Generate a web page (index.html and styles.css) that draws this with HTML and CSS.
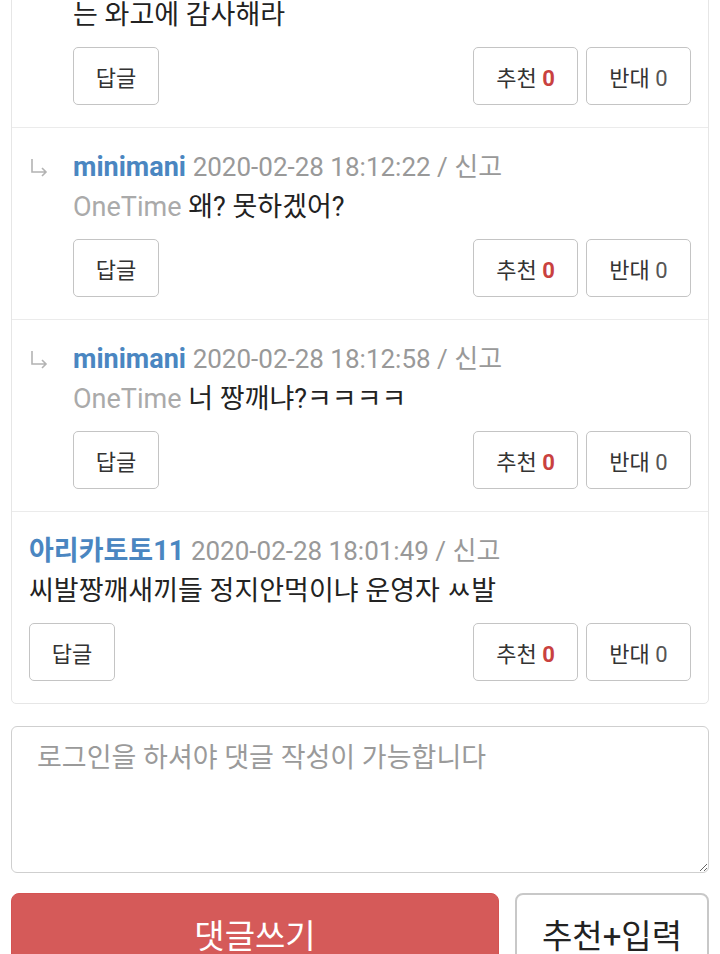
FILE: index.html
```html
<!DOCTYPE html>
<html lang="ko">
<head>
<meta charset="utf-8">
<title>댓글</title>
<link rel="stylesheet" href="styles.css">
</head>
<body>
<div class="page">
  <div class="card">
    <div class="comment reply">
      <div class="arrow"></div>
      <div class="body">
        <div class="text">는 와고에 감사해라</div>
        <div class="actions">
          <button class="btn btn-reply">답글</button>
          <div class="votes">
            <button class="btn btn-vote">추천 <b class="up">0</b></button>
            <button class="btn btn-vote">반대 <span class="down">0</span></button>
          </div>
        </div>
      </div>
    </div>
    <div class="comment reply">
      <div class="arrow"><svg class="arrow-icon" viewBox="0 0 20 20" width="20" height="20"><path d="M3 2 V15 H17 M13 11 L17 15 L13 19" fill="none" stroke="#b3b3b3" stroke-width="1.6"/></svg></div>
      <div class="body">
        <div class="meta"><span class="user">minimani</span> <span class="date">2020-02-28 18:12:22 / 신고</span></div>
        <div class="text"><span class="target">OneTime</span> 왜? 못하겠어?</div>
        <div class="actions">
          <button class="btn btn-reply">답글</button>
          <div class="votes">
            <button class="btn btn-vote">추천 <b class="up">0</b></button>
            <button class="btn btn-vote">반대 <span class="down">0</span></button>
          </div>
        </div>
      </div>
    </div>
    <div class="comment reply">
      <div class="arrow"><svg class="arrow-icon" viewBox="0 0 20 20" width="20" height="20"><path d="M3 2 V15 H17 M13 11 L17 15 L13 19" fill="none" stroke="#b3b3b3" stroke-width="1.6"/></svg></div>
      <div class="body">
        <div class="meta"><span class="user">minimani</span> <span class="date">2020-02-28 18:12:58 / 신고</span></div>
        <div class="text"><span class="target">OneTime</span> 너 짱깨냐?ㅋㅋㅋㅋ</div>
        <div class="actions">
          <button class="btn btn-reply">답글</button>
          <div class="votes">
            <button class="btn btn-vote">추천 <b class="up">0</b></button>
            <button class="btn btn-vote">반대 <span class="down">0</span></button>
          </div>
        </div>
      </div>
    </div>
    <div class="comment">
      <div class="body">
        <div class="meta"><span class="user">아리카토토11</span> <span class="date">2020-02-28 18:01:49 / 신고</span></div>
        <div class="text">씨발짱깨새끼들 정지안먹이냐 운영자 ㅆ발</div>
        <div class="actions">
          <button class="btn btn-reply">답글</button>
          <div class="votes">
            <button class="btn btn-vote">추천 <b class="up">0</b></button>
            <button class="btn btn-vote">반대 <span class="down">0</span></button>
          </div>
        </div>
      </div>
    </div>
  </div>

  <div class="write">
    <textarea class="input" placeholder="로그인을 하셔야 댓글 작성이 가능합니다"></textarea>
    <div class="submit-row">
      <button class="submit">댓글쓰기</button>
      <button class="submit-alt">추천+입력</button>
    </div>
  </div>
</div>
</body>
</html>
```

FILE: styles.css
```css
html, body {
  margin: 0;
  padding: 0;
  background: #fff;
}
body {
  font-family: "Roboto", "Noto Sans CJK KR", sans-serif;
  color: #222;
  font-size: 27px;
  overflow: hidden;
}
.page {
  padding: 0 11px;
  margin-top: -25px;
}
.card {
  border: 1px solid #e6e6e6;
  border-radius: 5px;
  background: #fff;
}
.comment {
  display: flex;
  padding: 19px 17px 22px 17px;
  border-top: 1px solid #ebebeb;
}
.comment:first-child {
  border-top: none;
}
.arrow {
  width: 44px;
  flex: none;
  padding: 10px 0 0 0;
  box-sizing: border-box;
}
.arrow-icon {
  display: block;
}
.body {
  flex: 1;
  min-width: 0;
}
.meta {
  line-height: 40px;
  height: 40px;
  white-space: nowrap;
}
.user {
  color: #4a86c1;
  font-weight: bold;
}
.date {
  color: #999;
  font-size: 26px;
}
.text {
  line-height: 40px;
  height: 40px;
  white-space: nowrap;
}
.target {
  color: #aaa;
}
.actions {
  margin-top: 12px;
  display: flex;
  justify-content: space-between;
}
.votes {
  display: flex;
  gap: 8px;
}
.btn {
  height: 58px;
  border: 1px solid #c4c4c4;
  border-radius: 5px;
  background: #fff;
  font-family: "Roboto", "Noto Sans CJK KR", sans-serif;
  font-size: 22px;
  color: #333;
  padding: 0;
  box-sizing: border-box;
}
.btn-reply {
  width: 86px;
}
.btn-vote {
  width: 105px;
}
.up {
  color: #c9413f;
  font-weight: bold;
}
.down {
  color: #555;
}
.write {
  margin-top: 22px;
}
.input {
  display: block;
  width: 100%;
  height: 147px;
  box-sizing: border-box;
  border: 1px solid #cfcfcf;
  border-radius: 6px;
  padding: 12px 25px;
  font-family: "Roboto", "Noto Sans CJK KR", sans-serif;
  font-size: 27px;
  line-height: 38px;
  resize: vertical;
  margin: 0;
}
.input::placeholder {
  color: #9a9a9a;
}
.submit-row {
  margin-top: 20px;
  display: flex;
  gap: 16px;
}
.submit {
  flex: none;
  width: 488px;
  height: 82px;
  border: 1px solid #d45352;
  border-radius: 8px;
  background: #d55a59;
  color: #fff;
  font-family: "Roboto", "Noto Sans CJK KR", sans-serif;
  font-size: 33px;
  padding: 0;
}
.submit-alt {
  flex: 1;
  height: 82px;
  border: 2px solid #c8c8c8;
  border-radius: 8px;
  background: #fff;
  color: #222;
  font-family: "Roboto", "Noto Sans CJK KR", sans-serif;
  font-size: 33px;
  padding: 0;
}
```
